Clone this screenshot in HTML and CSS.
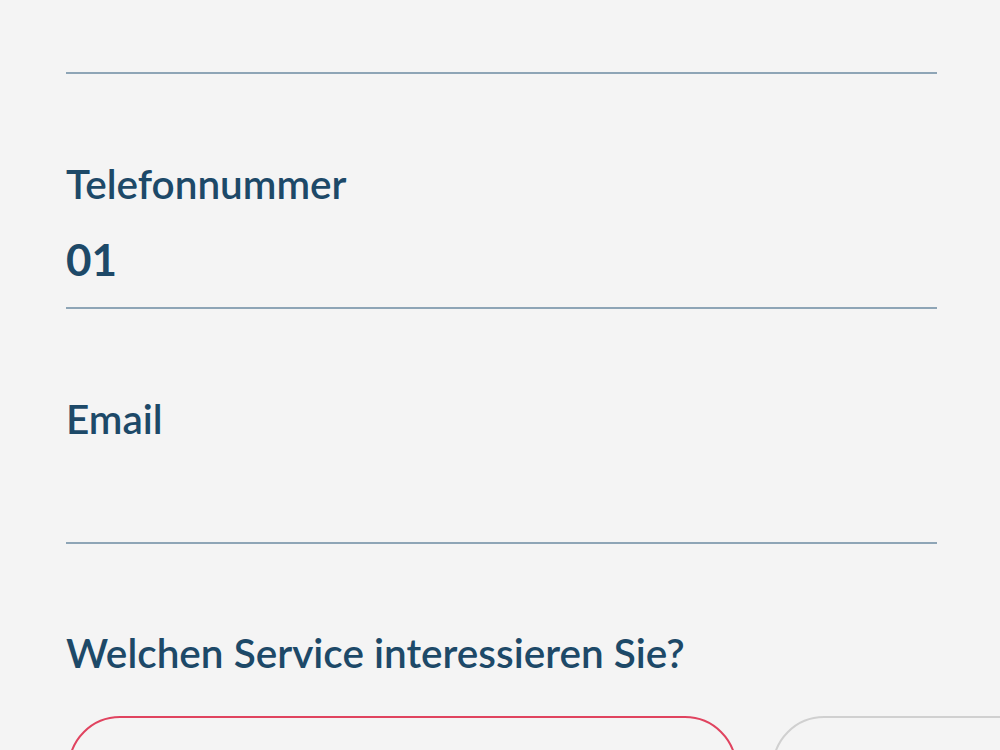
FILE: index.html
```html
<!DOCTYPE html>
<html lang="de">
<head>
  <meta charset="utf-8">
  <title>Kontakt</title>
  <link rel="stylesheet" href="styles.css">
</head>
<body>
  <form class="contact-form">
    <div class="field field-first"></div>

    <div class="field">
      <label class="field-label">Telefonnummer</label>
      <div class="field-value">01</div>
    </div>

    <div class="field">
      <label class="field-label">Email</label>
      <div class="field-value"></div>
    </div>

    <h2 class="service-title">Welchen Service interessieren Sie?</h2>

    <div class="service-options">
      <div class="service-option selected"></div>
      <div class="service-option"></div>
    </div>
  </form>
</body>
</html>
```

FILE: styles.css
```css
html {
  background: #f4f4f4;
}

body {
  margin: 0;
  height: 750px;
  overflow: hidden;
  font-family: Lato, "Noto Sans", sans-serif;
  color: #1d4968;
}

.contact-form {
  display: flex;
  flex-direction: column;
  padding-left: 66px;
  width: 871px;
}

.field {
  display: flex;
  flex-direction: column;
  padding-top: 87px;
  height: 146px;
  border-bottom: 2px solid #8ea5b6;
}

.field-first {
  padding-top: 0;
  height: 72px;
}

.field-label {
  font-size: 40.5px;
  line-height: 46px;
  font-weight: 600;
}

.field-value {
  margin-top: 27px;
  font-size: 44px;
  line-height: 50px;
  font-weight: 700;
  height: 50px;
}

.service-title {
  margin: 86px 0 0;
  font-size: 40.5px;
  line-height: 46px;
  font-weight: 600;
}

.service-options {
  display: flex;
  gap: 35px;
  margin-top: 40px;
  padding-left: 2px;
  width: 1000px;
}

.service-option {
  flex: 0 0 669px;
  height: 120px;
  border: 2px solid #d0d0d0;
  border-radius: 52px;
  box-sizing: border-box;
}

.service-option.selected {
  border-color: #e0435f;
}
```
